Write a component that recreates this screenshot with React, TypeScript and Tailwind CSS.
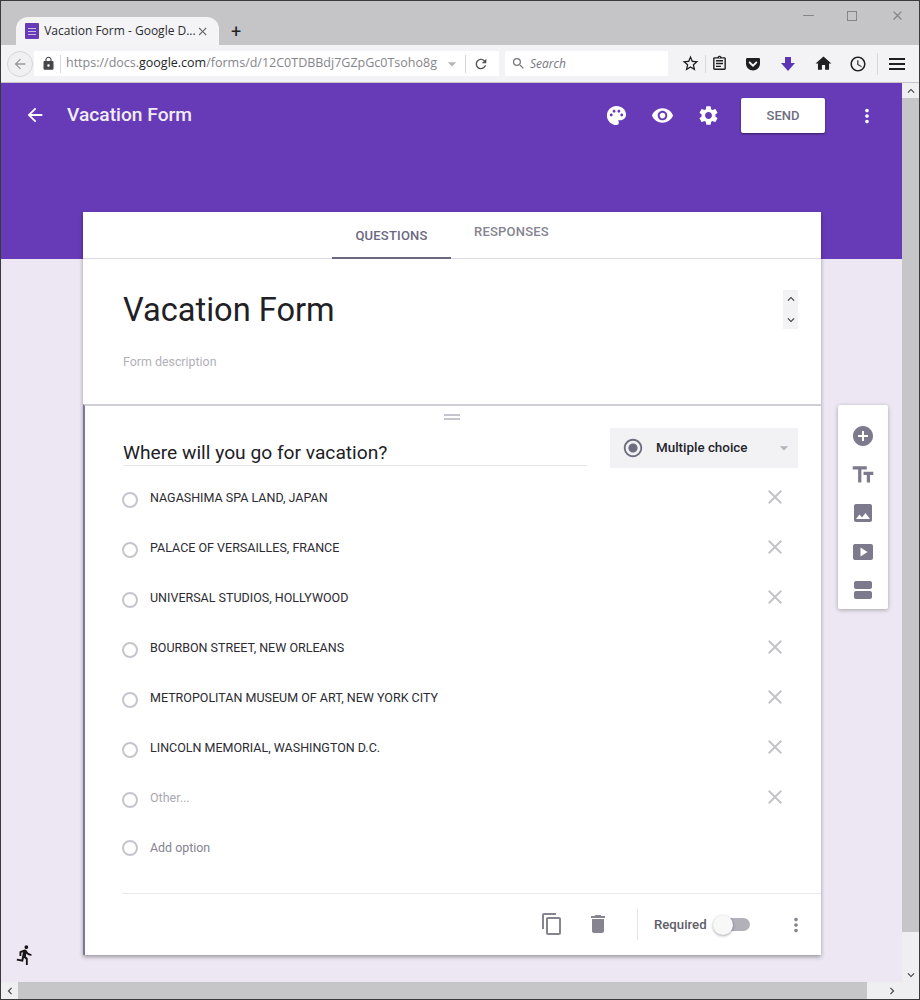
import React from "react";
import {
  MdAddCircle,
  MdArrowBack,
  MdArrowDropDown,
  MdClose,
  MdContentCopy,
  MdDelete,
  MdDirectionsRun,
  MdHome,
  MdImage,
  MdKeyboardArrowDown,
  MdKeyboardArrowLeft,
  MdKeyboardArrowRight,
  MdKeyboardArrowUp,
  MdLock,
  MdMoreVert,
  MdOutlineAssignment,
  MdPalette,
  MdRadioButtonChecked,
  MdRefresh,
  MdRemoveRedEye,
  MdSchedule,
  MdSearch,
  MdSettings,
  MdSmartDisplay,
  MdStarBorder,
  MdTextFields,
  MdViewAgenda,
} from "react-icons/md";
import { FaGetPocket } from "react-icons/fa";

const options = [
  "NAGASHIMA SPA LAND, JAPAN",
  "PALACE OF VERSAILLES, FRANCE",
  "UNIVERSAL STUDIOS, HOLLYWOOD",
  "BOURBON STREET, NEW ORLEANS",
  "METROPOLITAN MUSEUM OF ART, NEW YORK CITY",
  "LINCOLN MEMORIAL, WASHINGTON D.C.",
];

const Radio: React.FC = () => (
  <span className="w-[16px] h-[16px] rounded-full border-2 border-[#c6c5ce] shrink-0 mt-[2px]" />
);

const OptionRow: React.FC<{ label: string; muted?: boolean }> = ({ label, muted }) => (
  <div className="h-[50px] flex items-start pl-[37px] pr-[34px]">
    <Radio />
    <span className={`ml-[12px] text-[12.5px] leading-[16px] flex-1 ${muted ? "text-[#a9a8b0]" : "text-[#2c2b33]"}`}>
      {label}
    </span>
    <MdClose className="w-[24px] h-[24px] text-[#c4c4c8] -mt-[5px]" />
  </div>
);

const App: React.FC = () => {
  return (
    <div className="w-[920px] h-[1000px] flex flex-col overflow-hidden bg-[#c5c5c7] border border-[#3a3a3c] font-['Roboto',sans-serif]">
      {/* title bar */}
      <div className="h-[44px] shrink-0 flex items-end pl-[15px] relative">
        <div className="w-[203px] h-[28px] bg-[#f4f4f6] rounded-t-[12px] flex items-center pl-[9px] pr-[10px]">
          <span className="w-[16px] h-[16px] bg-[#673ab7] rounded-[1px] flex flex-col items-center justify-center gap-[2px]">
            <span className="w-[8px] h-[1px] bg-[#c9b8e6]" />
            <span className="w-[8px] h-[1px] bg-[#c9b8e6]" />
            <span className="w-[8px] h-[1px] bg-[#c9b8e6]" />
          </span>
          <span className="ml-[5px] text-[12px] text-[#2c2c30] font-['Open_Sans',sans-serif] whitespace-nowrap flex-1">
            Vacation Form - Google D...
          </span>
          <MdClose className="w-[15px] h-[15px] text-[#66666c]" />
        </div>
        <span className="ml-[12px] mb-[3px] text-[18px] leading-[20px] text-[#222]">+</span>
        <div className="absolute right-[14px] top-[7px] flex items-center gap-[33px] text-[#85858a]">
          <span className="w-[11px] h-[1px] bg-[#85858a]" />
          <span className="w-[10px] h-[10px] border border-[#85858a]" />
          <MdClose className="w-[15px] h-[15px]" />
        </div>
      </div>

      {/* browser toolbar */}
      <div className="h-[38px] shrink-0 bg-[#f3f3f5] border-b border-[#c4c4ca] flex items-center pl-[6px] font-['Open_Sans',sans-serif]">
        <span className="w-[26px] h-[26px] rounded-full border border-[#d4d4da] bg-[#f0f0f3] flex items-center justify-center">
          <MdArrowBack className="w-[16px] h-[16px] text-[#9a9aa0]" />
        </span>
        <div className="ml-[1px] w-[465px] h-[25px] bg-white flex items-center pl-[7px]">
          <MdLock className="w-[15px] h-[15px] text-[#45454a]" />
          <span className="ml-[4px] h-[18px] w-px bg-[#d8d8dc]" />
          <span className="ml-[5px] w-[375px] overflow-hidden whitespace-nowrap text-[12.5px] text-[#85858c]">
            https://docs.<span className="text-[#26262a]">google.com</span>/forms/d/12C0TDBBdj7GZpGc0Tsoho8g
          </span>
          <MdArrowDropDown className="ml-[1px] w-[20px] h-[20px] text-[#b5b5ba]" />
          <span className="ml-[3px] h-[18px] w-px bg-[#d8d8dc]" />
          <MdRefresh className="ml-[7px] w-[16px] h-[16px] text-[#55555a]" />
        </div>
        <div className="ml-[6px] w-[163px] h-[25px] bg-white flex items-center pl-[6px]">
          <MdSearch className="w-[15px] h-[15px] text-[#77777c]" />
          <span className="ml-[4px] text-[12px] italic text-[#77777f]">Search</span>
        </div>
        <MdStarBorder className="ml-[13px] w-[19px] h-[19px] text-[#1f1f22]" />
        <span className="ml-[5px] h-[18px] w-px bg-[#d8d8dc]" />
        <MdOutlineAssignment className="ml-[5px] w-[17px] h-[17px] text-[#1f1f22]" />
        <FaGetPocket className="ml-[17px] w-[16px] h-[16px] text-[#1f1f22]" />
        <svg viewBox="0 0 16 16" className="ml-[19px] w-[16px] h-[16px] text-[#5b35b5]" fill="currentColor">
          <path d="M5 1h6v6h4l-7 8-7-8h4z" />
        </svg>
        <MdHome className="ml-[18px] w-[19px] h-[19px] text-[#1f1f22]" />
        <MdSchedule className="ml-[16px] w-[18px] h-[18px] text-[#1f1f22]" />
        <span className="ml-[10px] h-[22px] w-px bg-[#d8d8dc]" />
        <span className="ml-[11px] w-[16px] flex flex-col gap-[3px]">
          <span className="h-[2px] bg-[#1f1f22]" />
          <span className="h-[2px] bg-[#1f1f22]" />
          <span className="h-[2px] bg-[#1f1f22]" />
        </span>
      </div>

      <div className="flex-1 flex min-h-0">
        {/* page */}
        <div className="w-[901px] shrink-0 bg-[#ede7f3] relative">
          <div className="h-[176px] bg-[#673ab7] pt-[15px] pl-[23px] pr-[24px] flex items-start">
            <MdArrowBack className="w-[22px] h-[22px] text-white mt-[6px]" />
            <span className="ml-[21px] mt-[4px] text-[19.2px] leading-[26px] font-medium text-[#f1edf8] flex-1">
              Vacation Form
            </span>
            <MdPalette className="w-[23px] h-[23px] text-white mt-[6px]" />
            <MdRemoveRedEye className="ml-[23px] w-[23px] h-[23px] text-white mt-[6px]" />
            <MdSettings className="ml-[23px] w-[23px] h-[23px] text-white mt-[6px]" />
            <span className="ml-[21px] w-[84px] h-[35px] bg-white rounded-[2px] shadow-[0_1px_2px_rgba(0,0,0,0.5)] flex items-center justify-center text-[13px] font-medium text-[#6f6e80]">
              SEND
            </span>
            <MdMoreVert className="ml-[31px] w-[22px] h-[22px] text-white mt-[7px]" />
          </div>

          <div className="-mt-[47px] ml-[82px] flex items-start gap-[17px]">
            {/* form card */}
            <div className="w-[738px] bg-white shadow-[0_2px_4px_rgba(0,0,0,0.35)]">
              <div className="h-[47px] border-b border-[#dcd9e4] flex justify-center relative text-[13px] font-medium tracking-[0.2px]">
                <div className="w-[119px] h-[47px] border-b-2 border-[#6b6880] flex items-center justify-center text-[#6b6880] pt-[2px]">
                  QUESTIONS
                </div>
                <div className="w-[121px] flex justify-center pt-[10px] text-[#85848f]">RESPONSES</div>
              </div>

              <div className="h-[145px] pt-[31px] pl-[40px] relative">
                <div className="text-[32.6px] leading-[40px] text-[#212025]">Vacation Form</div>
                <div className="mt-[24px] text-[12.4px] leading-[16px] text-[#b1b0b8]">Form description</div>
                <div className="absolute right-[23px] top-[31px] w-[15px] h-[39px] bg-[#f2f1f4] flex flex-col items-center justify-between py-[2px] text-[#3d3c44]">
                  <MdKeyboardArrowUp className="w-[14px] h-[14px]" />
                  <MdKeyboardArrowDown className="w-[14px] h-[14px]" />
                </div>
              </div>

              <div className="h-[551px] border-l-2 border-l-[#7b76a0] border-t-2 border-t-[#d0cfd6] relative">
                <div className="flex justify-center pt-[8px] h-[23px] pr-[2px]">
                  <div className="w-[16px] flex flex-col gap-[2px]">
                    <span className="h-[2px] bg-[#c6c5ce]" />
                    <span className="h-[2px] bg-[#c6c5ce]" />
                  </div>
                </div>
                <div className="flex items-start pl-[38px]">
                  <div className="w-[464px] h-[37px] border-b border-[#e4e3e8] pt-[12px] text-[19.2px] leading-[24px] text-[#212025]">
                    Where will you go for vacation?
                  </div>
                  <div className="ml-[23px] -mt-[1px] w-[188px] h-[40px] bg-[#f2f1f4] flex items-center pl-[12px] pr-[4px]">
                    <MdRadioButtonChecked className="w-[22px] h-[22px] text-[#6f6e80]" />
                    <span className="ml-[12px] mt-[1px] text-[13.4px] font-medium text-[#26252c] flex-1">Multiple choice</span>
                    <MdArrowDropDown className="w-[20px] h-[20px] text-[#b4b3bb]" />
                  </div>
                </div>
                <div className="mt-[22px]">
                  {options.map((o) => (
                    <OptionRow key={o} label={o} />
                  ))}
                  <OptionRow label="Other..." muted />
                  <div className="h-[55px] -mt-[2px] flex items-start pl-[37px]">
                    <Radio />
                    <span className="ml-[12px] text-[12.4px] leading-[16px] text-[#85848f] mt-[2px]">Add option</span>
                  </div>
                </div>
                <div className="ml-[37px] border-t border-[#e8e7ec] h-[62px] flex items-center pl-[418px]">
                  <MdContentCopy className="w-[24px] h-[24px] -mt-[2px] text-[#85848f]" />
                  <MdDelete className="ml-[22px] w-[24px] h-[24px] -mt-[2px] text-[#85848f]" />
                  <span className="ml-[27px] h-[31px] w-px bg-[#e4e3e8]" />
                  <span className="ml-[16px] text-[13.2px] font-medium text-[#5f5e68] whitespace-nowrap">Required</span>
                  <span className="ml-[6px] relative w-[37px] h-[20px] flex items-center">
                    <span className="absolute right-0 w-[30px] h-[13px] rounded-full bg-[#b2b1b9]" />
                    <span className="absolute left-0 w-[20px] h-[20px] rounded-full bg-[#f8f8f9] shadow-[0_1px_3px_rgba(0,0,0,0.35)]" />
                  </span>
                  <MdMoreVert className="ml-[35px] w-[22px] h-[22px] text-[#85848f]" />
                </div>
              </div>
            </div>

            {/* side tools */}
            <div className="mt-[193px] w-[50px] h-[204px] bg-white rounded-[2px] shadow-[0_1px_4px_rgba(0,0,0,0.3)] flex flex-col items-center pt-[19px] gap-[14.5px] text-[#7c7a8c]">
              <MdAddCircle className="w-[24px] h-[24px]" />
              <MdTextFields className="w-[26px] h-[26px] -my-[1px]" />
              <MdImage className="w-[24px] h-[24px]" />
              <MdSmartDisplay className="w-[24px] h-[24px]" />
              <MdViewAgenda className="w-[24px] h-[24px]" />
            </div>
          </div>

          <MdDirectionsRun className="absolute left-[13px] bottom-[16px] w-[22px] h-[22px] text-[#151515]" />
        </div>

        {/* vertical scrollbar */}
        <div className="flex-1 bg-[#c6c6c8] flex flex-col justify-between">
          <div className="h-[15px] bg-[#efeff1] flex items-center justify-center">
            <MdKeyboardArrowUp className="w-[14px] h-[14px] text-[#444]" />
          </div>
          <div className="h-[50px] bg-[#efeff1] flex items-end justify-center">
            <MdKeyboardArrowDown className="w-[14px] h-[14px] text-[#444]" />
          </div>
        </div>
      </div>

      {/* horizontal scrollbar */}
      <div className="h-[17px] shrink-0 bg-[#c6c6c8] flex justify-between">
        <div className="w-[17px] bg-[#efeff1] flex items-center justify-center">
          <MdKeyboardArrowLeft className="w-[14px] h-[14px] text-[#444]" />
        </div>
        <div className="w-[52px] bg-[#efeff1] flex items-center justify-end pr-[20px]">
          <MdKeyboardArrowRight className="w-[14px] h-[14px] text-[#444]" />
        </div>
      </div>
    </div>
  );
};

export default App;
